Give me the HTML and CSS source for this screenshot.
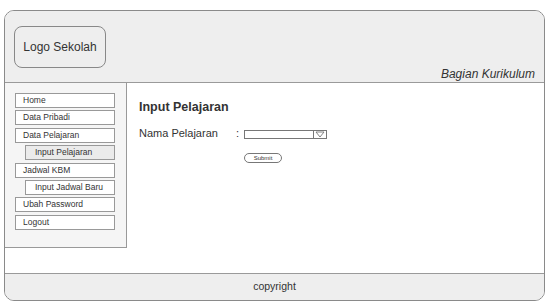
FILE: index.html
```html
<!DOCTYPE html>
<html>
<head>
<meta charset="utf-8">
<link rel="stylesheet" href="styles.css">
</head>
<body>
<div class="frame">
  <header class="header">
    <div class="logo">Logo Sekolah</div>
    <div class="role">Bagian Kurikulum</div>
  </header>
  <div class="main">
    <nav class="sidebar">
      <div class="item">Home</div>
      <div class="item">Data Pribadi</div>
      <div class="item">Data Pelajaran</div>
      <div class="item sub active">Input Pelajaran</div>
      <div class="item">Jadwal KBM</div>
      <div class="item sub">Input Jadwal Baru</div>
      <div class="item">Ubah Password</div>
      <div class="item">Logout</div>
    </nav>
    <section class="content">
      <h1 class="title">Input Pelajaran</h1>
      <div class="form-row">
        <span class="label">Nama Pelajaran</span>
        <span class="colon">:</span>
        <div class="select">
          <span class="select-arrow">
            <svg width="10" height="7" viewBox="0 0 10 7"><path d="M1 1 L9 1 L5 6 Z" fill="none" stroke="#666" stroke-width="0.8"/></svg>
          </span>
        </div>
      </div>
      <div class="btn-row">
        <div class="btn">Submit</div>
      </div>
    </section>
  </div>
  <footer class="footer">copyright</footer>
</div>
</body>
</html>
```
FILE: styles.css
```css
* { box-sizing: border-box; }
body {
  margin: 0;
  background: #fff;
  font-family: "Liberation Sans", Arial, sans-serif;
  color: #333;
}
.frame {
  margin: 10px 0 0 4px;
  width: 541px;
  height: 291px;
  border: 1px solid #8a8a8a;
  border-radius: 10px;
  display: flex;
  flex-direction: column;
  overflow: hidden;
  background: #fff;
}
.header {
  height: 72px;
  background: #eeeeee;
  border-bottom: 1px solid #9a9a9a;
  display: flex;
  justify-content: space-between;
  align-items: flex-start;
  padding: 15px 9px 0 9px;
  flex: none;
}
.logo {
  width: 92px;
  height: 42px;
  border: 1px solid #888;
  border-radius: 8px;
  display: flex;
  align-items: center;
  justify-content: center;
  font-size: 12px;
  color: #333;
  background: #eeeeee;
}
.role {
  align-self: flex-end;
  font-style: italic;
  font-size: 12px;
  color: #333;
  margin-bottom: 1px;
}
.main {
  flex: 1;
  display: flex;
  align-items: flex-start;
}
.sidebar {
  width: 122px;
  height: 165px;
  background: #f5f5f5;
  border-right: 1px solid #999;
  border-bottom: 1px solid #999;
  padding: 10px 0 0 10px;
  display: flex;
  flex-direction: column;
  gap: 2.4px;
}
.item {
  width: 100px;
  height: 15px;
  border: 1px solid #999;
  background: #fff;
  font-size: 8.5px;
  line-height: 13px;
  padding-left: 7px;
  color: #333;
}
.item.sub {
  width: 90px;
  margin-left: 10px;
  padding-left: 9px;
}
.item.active {
  background: #ebebeb;
}
.content {
  flex: 1;
  padding: 16px 0 0 12px;
}
.title {
  margin: 0;
  font-size: 12.5px;
  font-weight: bold;
  color: #333;
  line-height: 16px;
}
.form-row {
  margin-top: 11px;
  display: flex;
  align-items: flex-start;
  height: 14px;
}
.label {
  font-size: 11px;
  line-height: 14px;
  width: 97px;
  color: #333;
}
.colon {
  font-size: 11px;
  line-height: 14px;
  width: 8px;
}
.select {
  width: 83px;
  height: 9px;
  border: 1px solid #777;
  background: #fff;
  display: flex;
  justify-content: flex-end;
  margin-top: 4px;
}
.select-arrow {
  width: 13px;
  border-left: 1px solid #777;
  display: flex;
  align-items: center;
  justify-content: center;
}
.btn-row {
  margin-top: 13px;
  padding-left: 105px;
}
.btn {
  width: 38px;
  height: 10px;
  border: 1px solid #777;
  border-radius: 5px;
  font-size: 6px;
  line-height: 8px;
  text-align: center;
  color: #333;
  background: #fff;
}
.footer {
  height: 27px;
  flex: none;
  background: #eeeeee;
  border-top: 1px solid #9a9a9a;
  text-align: center;
  font-size: 10.5px;
  line-height: 25px;
  color: #333;
}
```
